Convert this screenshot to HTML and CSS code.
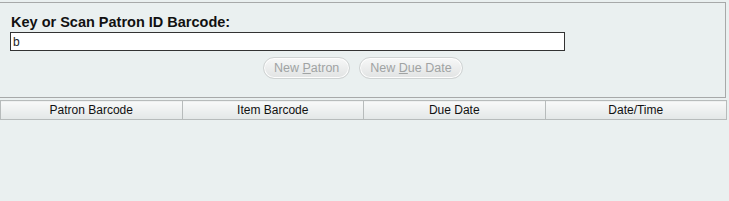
FILE: index.html
```html
<!DOCTYPE html>
<html lang="en">
<head>
    <meta charset="UTF-8">
    <title>Check In</title>
    <link rel="stylesheet" href="styles.css">
</head>
<body>
    <div class="scan-panel">
        <label class="scan-label" for="patronId">Key or Scan Patron ID Barcode:</label>
        <input type="text" id="patronId" class="scan-input" value="b">
        <div class="button-row">
            <button type="button" class="pill-btn" disabled>New <u>P</u>atron</button>
            <button type="button" class="pill-btn" disabled>New <u>D</u>ue Date</button>
        </div>
    </div>

    <table class="result-grid">
        <thead>
            <tr>
                <th>Patron Barcode</th>
                <th>Item Barcode</th>
                <th>Due Date</th>
                <th>Date/Time</th>
            </tr>
        </thead>
        <tbody></tbody>
    </table>
</body>
</html>
```

FILE: styles.css
```css
body {
    margin: 0;
    width: 729px;
    height: 201px;
    background-color: #eaf0f0;
    font-family: "Liberation Sans", Arial, sans-serif;
    overflow: hidden;
}
.scan-panel {
    margin-top: 2px;
    width: 726px;
    height: 96px;
    border-top: 1px solid #a7a9a9;
    border-right: 1px solid #a7a9a9;
    border-bottom: 1px solid #a7a9a9;
    padding: 11px 0 0 10px;
    box-sizing: border-box;
}
.scan-label {
    display: block;
    font-size: 14.5px;
    font-weight: bold;
    color: #111;
    margin-left: 1px;
    line-height: 16px;
    margin-bottom: 2px;
}
.scan-input {
    display: block;
    width: 555px;
    height: 19px;
    box-sizing: border-box;
    border: 1px solid #333;
    margin: 0;
    padding: 0 2px;
    font-family: "Liberation Sans", Arial, sans-serif;
    font-size: 12px;
    color: #222;
    background: #fff;
    outline: none;
}
.button-row {
    display: flex;
    gap: 9px;
    margin-top: 6px;
    padding-left: 253px;
}
.pill-btn {
    height: 22px;
    padding: 0 10px;
    border: 1px solid #cfd3d3;
    border-radius: 11px;
    background: linear-gradient(#f7f8f8, #e1e3e3);
    box-shadow: inset 0 0 0 1px #fdfdfd;
    font-family: "Liberation Sans", Arial, sans-serif;
    font-size: 12.5px;
    color: #a0a3a3;
    cursor: default;
}
.result-grid {
    margin-top: 2px;
    width: 727px;
    border-collapse: collapse;
    table-layout: fixed;
}
.result-grid th {
    height: 18px;
    padding: 0;
    border: 1px solid #b7bbbb;
    background: linear-gradient(#f8f9f9, #e3e7e7);
    font-size: 12px;
    font-weight: normal;
    color: #111;
    text-align: center;
}
```
